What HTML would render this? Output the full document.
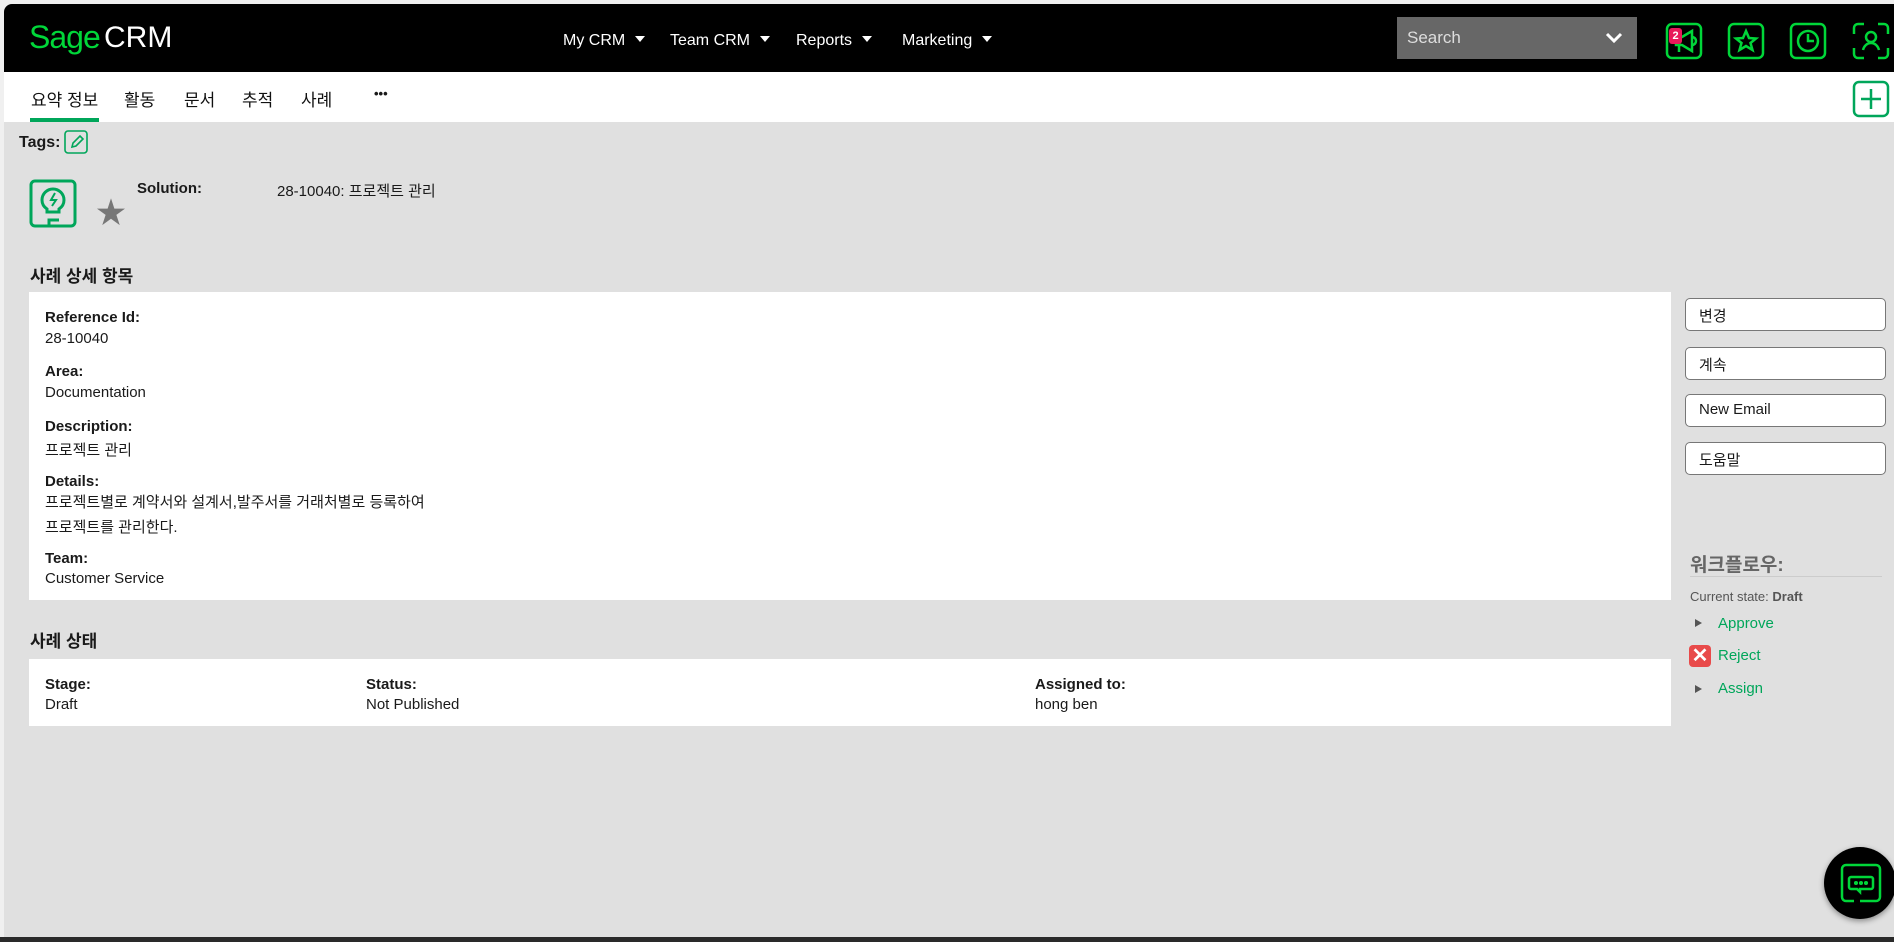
<!DOCTYPE html>
<html><head><meta charset="utf-8"><style>
*{margin:0;padding:0;box-sizing:border-box}
body{width:1894px;height:942px;overflow:hidden;background:#f0f0f0;font-family:"Liberation Sans","Noto Sans CJK KR",sans-serif;color:#1a1a1a;position:relative}
.a{position:absolute;white-space:nowrap}
#frame{position:absolute;left:4px;top:4px;width:1890px;height:933px;background:#e0e0e0;border-radius:8px 0 0 0;overflow:hidden}
#hdr{position:absolute;left:0;top:0;width:1890px;height:68px;background:#000}
#tabs{position:absolute;left:0;top:68px;width:1890px;height:50px;background:#fff}
.nav{color:#fff;font-size:16px;top:28px}
.nav:after{content:"";display:inline-block;margin-left:10px;border-left:5px solid transparent;border-right:5px solid transparent;border-top:6px solid #fff;vertical-align:3px}
.tab{font-size:17px;top:14px;color:#111}
.lbl{font-size:15px;font-weight:bold}
.val{font-size:15px}
.btn{position:absolute;left:1681px;width:201px;height:33px;background:#fff;border:1px solid #777;border-radius:5px;font-size:15px;padding:6px 0 0 13px}
.lnk{color:#00a65a;font-size:15px}
.tri{width:0;height:0;border-top:4px solid transparent;border-bottom:4px solid transparent;border-left:7px solid #555}
</style></head><body>
<div id="frame">
<div id="hdr">
 <div class="a" style="left:25px;top:15px;font-size:32px;color:#00d639;letter-spacing:-1px">Sage</div>
 <div class="a" style="left:100px;top:17px;font-size:30px;color:#fff">CRM</div>
 <div class="a nav" style="left:559px">My CRM</div>
 <div class="a nav" style="left:666px">Team CRM</div>
 <div class="a nav" style="left:792px">Reports</div>
 <div class="a nav" style="left:898px">Marketing</div>
 <div class="a" style="left:1393px;top:13px;width:240px;height:42px;background:#676767"></div>
 <div class="a" style="left:1403px;top:24px;font-size:17px;color:#ddd">Search</div>
 <svg class="a" style="left:1600px;top:27px" width="20" height="14" viewBox="0 0 20 14"><path d="M3 3l7 7 7-7" stroke="#fff" stroke-width="3" fill="none"/></svg>
 <svg class="a" style="left:1661px;top:18px" width="40" height="40" viewBox="0 0 40 40" fill="none" stroke="#00d639" stroke-width="2.5"><rect x="2" y="2" width="34" height="34" rx="5"/><path d="M11 15h6l10-6v20l-10-6h-6zM14 23v7M27 15a4 4 0 010 8"/></svg>
 <div class="a" style="left:1665px;top:24px;width:13px;height:16px;background:#e8195a;border-radius:3px;color:#fff;font-size:11px;font-weight:bold;text-align:center;line-height:16px">2</div>
 <svg class="a" style="left:1723px;top:18px" width="40" height="40" viewBox="0 0 40 40" fill="none" stroke="#00d639" stroke-width="2.5"><rect x="2" y="2" width="34" height="34" rx="5"/><path d="M19 9l3 7 7 .5-5.5 4.5 2 7-6.5-4-6.5 4 2-7L9 16.5l7-.5z"/></svg>
 <svg class="a" style="left:1785px;top:18px" width="40" height="40" viewBox="0 0 40 40" fill="none" stroke="#00d639" stroke-width="2.5"><rect x="2" y="2" width="34" height="34" rx="5"/><circle cx="19" cy="19" r="10"/><path d="M19 12v7h6"/></svg>
 <svg class="a" style="left:1848px;top:18px" width="40" height="40" viewBox="0 0 40 40" fill="none" stroke="#00d639" stroke-width="2.5"><path d="M2 12V6a4 4 0 014-4h6M26 2h6a4 4 0 014 4v6M36 26v6a4 4 0 01-4 4h-6M12 36H6a4 4 0 01-4-4v-6"/><circle cx="19" cy="15" r="5"/><path d="M11 28c1-4 4-7 8-7s7 3 8 7"/></svg>
</div>
<div id="tabs">
 <div class="a tab" style="left:27px">요약 정보</div>
 <div class="a" style="left:26px;top:46px;width:69px;height:4px;background:#00a65a"></div>
 <div class="a tab" style="left:120px">활동</div>
 <div class="a tab" style="left:180px">문서</div>
 <div class="a tab" style="left:238px">추적</div>
 <div class="a tab" style="left:297px">사례</div>
 <div class="a" style="left:370px;top:14px;font-size:13px;font-weight:bold">•••</div>
 <svg class="a" style="left:1848px;top:8px" width="38" height="38" viewBox="0 0 38 38" fill="none" stroke="#00a65a" stroke-width="2.5"><rect x="2" y="2" width="34" height="34" rx="5"/><path d="M19 9v20M9 19h20"/></svg>
</div>
<div class="a lbl" style="left:15px;top:130px;font-size:16px">Tags:</div>
<svg class="a" style="left:60px;top:126px" width="24" height="24" viewBox="0 0 24 24" fill="none" stroke="#00a65a" stroke-width="1.6"><rect x="1" y="1" width="22" height="22" rx="3"/><path d="M8 17l1-4 7-7 3 3-7 7z"/></svg>
<svg class="a" style="left:25px;top:175px" width="50" height="50" viewBox="0 0 50 50" fill="none" stroke="#00a65a" stroke-width="3"><path d="M20 47H6a4 4 0 01-4-4V6a4 4 0 014-4h36a4 4 0 014 4v37a4 4 0 01-4 4H18"/><path d="M20 47v-6h10M18 33v-3c-3-2-5-5-5-9a11 11 0 0122 0c0 4-2 7-5 9v3z"/><path d="M26 14l-4 7h5l-4 6" stroke-width="2"/></svg>
<div class="a" style="left:92px;top:184px;font-size:30px;color:#777">★</div>
<div class="a lbl" style="left:133px;top:176px">Solution:</div>
<div class="a val" style="left:273px;top:176px">28-10040: 프로젝트 관리</div>
<div class="a lbl" style="left:26px;top:258px;font-size:17px">사례 상세 항목</div>
<div class="a" style="left:25px;top:288px;width:1642px;height:308px;background:#fff"></div>
<div class="a lbl" style="left:41px;top:305px">Reference Id:</div><div class="a val" style="left:41px;top:326px">28-10040</div>
<div class="a lbl" style="left:41px;top:359px">Area:</div><div class="a val" style="left:41px;top:380px">Documentation</div>
<div class="a lbl" style="left:41px;top:414px">Description:</div><div class="a val" style="left:41px;top:435px">프로젝트 관리</div>
<div class="a lbl" style="left:41px;top:469px">Details:</div><div class="a val" style="left:41px;top:487px">프로젝트별로 계약서와 설계서,발주서를 거래처별로 등록하여</div><div class="a val" style="left:41px;top:512px">프로젝트를 관리한다.</div>
<div class="a lbl" style="left:41px;top:546px">Team:</div><div class="a val" style="left:41px;top:566px">Customer Service</div>
<div class="a lbl" style="left:26px;top:623px;font-size:17px">사례 상태</div>
<div class="a" style="left:25px;top:655px;width:1642px;height:67px;background:#fff"></div>
<div class="a lbl" style="left:41px;top:672px">Stage:</div><div class="a val" style="left:41px;top:692px">Draft</div>
<div class="a lbl" style="left:362px;top:672px">Status:</div><div class="a val" style="left:362px;top:692px">Not Published</div>
<div class="a lbl" style="left:1031px;top:672px">Assigned to:</div><div class="a val" style="left:1031px;top:692px">hong ben</div>
<div class="btn" style="top:294px">변경</div>
<div class="btn" style="top:343px">계속</div>
<div class="btn" style="top:390px">New Email</div>
<div class="btn" style="top:438px">도움말</div>
<div class="a" style="left:1686px;top:546px;font-size:19px;font-weight:bold;color:#666">워크플로우:</div>
<div class="a" style="left:1686px;top:572px;width:192px;height:1px;background:#ccc"></div>
<div class="a" style="left:1686px;top:585px;font-size:13px;color:#555">Current state: <b>Draft</b></div>
<div class="a tri" style="left:1691px;top:615px"></div><div class="a lnk" style="left:1714px;top:611px">Approve</div>
<div class="a" style="left:1685px;top:641px;width:22px;height:22px;background:#e84a4a;border-radius:4px;color:#fff;font-size:20px;font-weight:bold;text-align:center;line-height:22px">✕</div><div class="a lnk" style="left:1714px;top:643px">Reject</div>
<div class="a tri" style="left:1691px;top:681px"></div><div class="a lnk" style="left:1714px;top:676px">Assign</div>
<div class="a" style="left:1820px;top:843px;width:72px;height:72px;border-radius:50%;background:#000;box-shadow:0 2px 6px rgba(0,0,0,.4)"></div>
<svg class="a" style="left:1836px;top:859px" width="42" height="42" viewBox="0 0 42 42" fill="none" stroke="#00d639" stroke-width="2.5"><path d="M14 38H6a4 4 0 01-4-4V6a4 4 0 014-4h30a4 4 0 014 4v28a4 4 0 01-4 4H20"/><path d="M11 14h20a2 2 0 012 2v8a2 2 0 01-2 2H20v3l-3-3h-6a2 2 0 01-2-2v-8a2 2 0 012-2z"/><circle cx="16" cy="20" r=".8" fill="#00d639"/><circle cx="21" cy="20" r=".8" fill="#00d639"/><circle cx="26" cy="20" r=".8" fill="#00d639"/></svg>
</div>
<div class="a" style="left:0;top:937px;width:1894px;height:5px;background:#2a2a2a"></div>
</body></html>
